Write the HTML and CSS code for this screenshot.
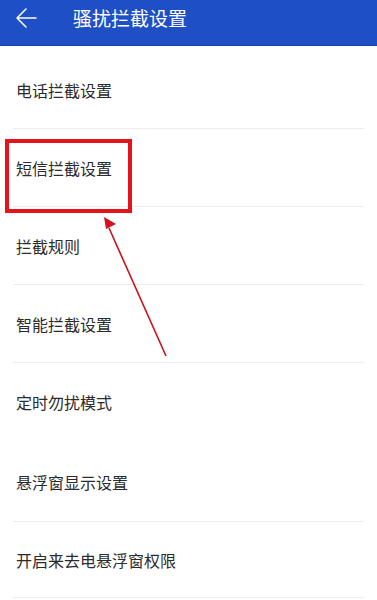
FILE: index.html
```html
<!DOCTYPE html>
<html lang="zh-CN">
<head>
<meta charset="utf-8">
<title>骚扰拦截设置</title>
<link rel="stylesheet" href="styles.css">
</head>
<body>
<div class="page">
  <header class="appbar">
    <svg class="back" width="22" height="22" viewBox="0 0 22 22">
      <path d="M2 11 H21 M11 2 L2 11 L11 20" fill="none" stroke="#ffffff" stroke-width="1.5" stroke-linecap="round" stroke-linejoin="round"/>
    </svg>
    <h1 class="title">骚扰拦截设置</h1>
  </header>
  <ul class="list">
    <li class="item">电话拦截设置</li>
    <li class="item">短信拦截设置</li>
    <li class="item">拦截规则</li>
    <li class="item">智能拦截设置</li>
    <li class="item item-noline item-78">定时勿扰模式</li>
    <li class="item item-79">悬浮窗显示设置</li>
    <li class="item item-75">开启来去电悬浮窗权限</li>
  </ul>
  <svg class="annotation" width="377" height="600" viewBox="0 0 377 600">
    <rect x="7" y="141" width="123" height="70" fill="none" stroke="#e5141c" stroke-width="4"/>
    <line x1="166" y1="356" x2="109" y2="228" stroke="#c8121c" stroke-width="1.6"/>
    <polygon points="104,217 116,224 106,229" fill="#d4121c"/>
  </svg>
</div>
</body>
</html>
```
FILE: styles.css
```css
* { box-sizing: border-box; }
html, body {
  margin: 0;
  padding: 0;
  background: #ffffff;
}
.page {
  position: relative;
  width: 377px;
  height: 600px;
  overflow: hidden;
  font-family: "Noto Sans CJK SC", "Noto Sans", sans-serif;
}
.appbar {
  height: 46px;
  background: #1f4fc5;
  border-bottom: 1px solid #1a45ac;
  display: flex;
  align-items: flex-start;
  padding: 7px 0 0 15px;
}
.back {
  display: block;
}
.title {
  margin: 0 0 0 36px;
  font-size: 19px;
  font-weight: normal;
  color: #ffffff;
  line-height: 22px;
}
.list {
  list-style: none;
  margin: 0;
  padding: 5px 0 0 0;
}
.item {
  margin: 0 13px;
  padding: 0 0 0 3px;
  height: 78px;
  border-bottom: 1px solid #ececec;
  display: flex;
  align-items: center;
  font-size: 16px;
  color: #2b2b2b;
}
.item-noline { border-bottom-color: transparent; }
.item-78 { height: 79px; }
.item-79 { height: 80px; }
.item-75 { height: 76px; }
.annotation {
  position: absolute;
  left: 0;
  top: 0;
  pointer-events: none;
}
```
